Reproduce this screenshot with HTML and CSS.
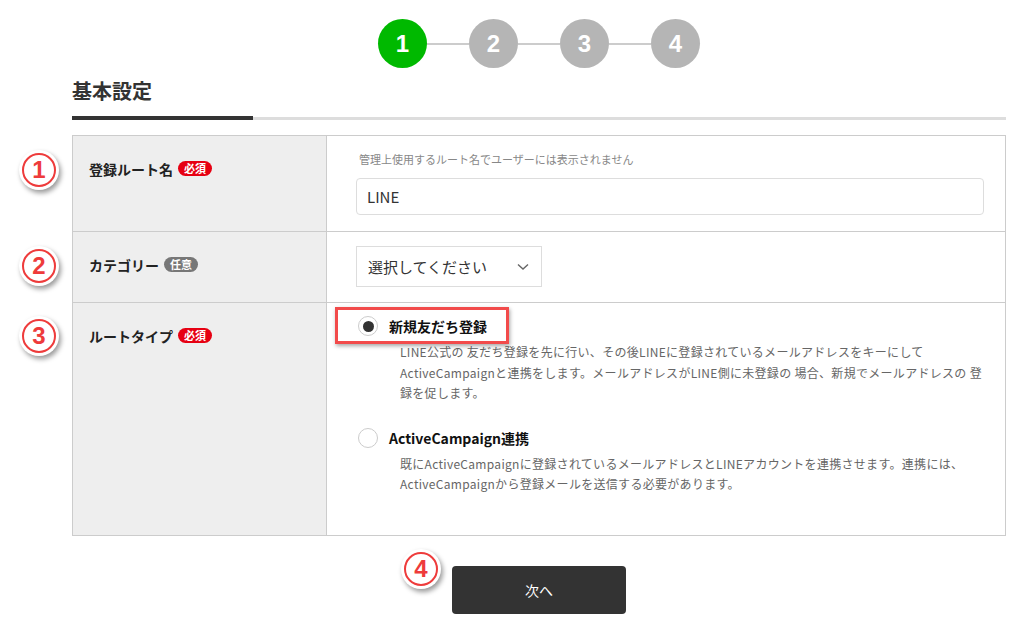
FILE: index.html
```html
<!DOCTYPE html>
<html lang="ja">
<head>
  <meta charset="UTF-8">
  <meta name="viewport" content="width=device-width, initial-scale=1.0">
  <title>登録ルート設定</title>
  <link rel="stylesheet" href="styles.css">
</head>
<body>
  <div class="page">
    <ol class="steps">
      <li class="step active">1</li>
      <li class="bar"></li>
      <li class="step">2</li>
      <li class="bar"></li>
      <li class="step">3</li>
      <li class="bar"></li>
      <li class="step">4</li>
    </ol>

    <h2 class="title">基本設定</h2>
    <div class="tabline"><span></span></div>

    <div class="form">
      <div class="row">
        <div class="label">登録ルート名<span class="badge req">必須</span></div>
        <div class="field">
          <p class="hint">管理上使用するルート名でユーザーには表示されません</p>
          <div class="input">LINE</div>
        </div>
      </div>
      <div class="row">
        <div class="label">カテゴリー<span class="badge opt">任意</span></div>
        <div class="field field-select">
          <div class="select">
            <span>選択してください</span>
            <svg width="12" height="8" viewBox="0 0 12 8"><polyline points="1,1.5 6,6 11,1.5" fill="none" stroke="#666" stroke-width="1.4"/></svg>
          </div>
        </div>
      </div>
      <div class="row">
        <div class="label">ルートタイプ<span class="badge req">必須</span></div>
        <div class="field field-type">
          <div class="option">
            <div class="opt-head"><span class="radio checked"></span>新規友だち登録</div>
            <p class="desc">LINE公式の 友だち登録を先に行い、その後LINEに登録されているメールアドレスをキーにして<br>ActiveCampaignと連携をします。メールアドレスがLINE側に未登録の 場合、新規でメールアドレスの 登<br>録を促します。</p>
            <div class="mark"></div>
          </div>
          <div class="option">
            <div class="opt-head"><span class="radio"></span>ActiveCampaign連携</div>
            <p class="desc">既にActiveCampaignに登録されているメールアドレスとLINEアカウントを連携させます。連携には、<br>ActiveCampaignから登録メールを送信する必要があります。</p>
          </div>
        </div>
      </div>
    </div>

    <div class="actions">
      <button class="next">次へ</button>
    </div>

    <div class="num n1">1</div>
    <div class="num n2">2</div>
    <div class="num n3">3</div>
    <div class="num n4">4</div>
  </div>
</body>
</html>
```

FILE: styles.css
```css
body,
div,
ol,
li,
p,
h2,
button {
  margin: 0;
  padding: 0;
  border: 0;
}

li {
  list-style: none;
}

body {
  background: #fff;
  color: #222;
  font-family: "Noto Sans CJK JP", "Noto Sans", sans-serif;
}

.page {
  position: relative;
  width: 934px;
  margin-left: 72px;
  padding-top: 19px;
}

/* steps */
.steps {
  display: flex;
  justify-content: center;
  align-items: center;
}
.step {
  width: 49px;
  height: 49px;
  border-radius: 50%;
  background: #b5b5b5;
  color: #fff;
  font-size: 24px;
  font-weight: bold;
  line-height: 49px;
  text-align: center;
  font-family: "Liberation Sans", sans-serif;
}
.step.active {
  background: #00b900;
}
.bar {
  width: 42px;
  height: 2px;
  background: #ccc;
}

/* title + tab line */
.title {
  margin-top: 9px;
  font-size: 20px;
  line-height: 27px;
  color: #333;
  padding-bottom: 12px;
}
.tabline {
  display: flex;
  align-items: center;
  height: 4px;
  background: linear-gradient(#fff 0, #fff 1px, #ddd 1px, #ddd 4px);
}
.tabline span {
  width: 181px;
  height: 4px;
  background: #333;
}

/* form table */
.form {
  margin-top: 15px;
  border: 1px solid #ccc;
}
.row {
  display: flex;
  border-top: 1px solid #ccc;
}
.row:first-child {
  border-top: 0;
}
.label {
  width: 237px;
  flex-shrink: 0;
  padding: 23px 0 0 16px;
  background: #eee;
  border-right: 1px solid #ccc;
  font-size: 14px;
  font-weight: bold;
  line-height: 20px;
  color: #222;
}
.badge {
  display: inline-block;
  margin-left: 5px;
  padding: 0 6px;
  height: 15px;
  border-radius: 8px;
  color: #fff;
  font-size: 11px;
  line-height: 15px;
  vertical-align: 2px;
}
.badge.req {
  background: #e60012;
}
.badge.opt {
  background: #777;
}
.field {
  flex: 1;
  padding: 14px 21px 16px 29px;
}
.hint {
  font-size: 11px;
  line-height: 18px;
  color: #888;
  padding-left: 3px;
}
.input {
  margin-top: 10px;
  height: 35px;
  border: 1px solid #ddd;
  border-radius: 4px;
  padding-left: 10px;
  font-size: 15px;
  line-height: 35px;
  color: #333;
}
.field-select {
  padding-bottom: 15px;
}
.select {
  display: flex;
  align-items: center;
  justify-content: space-between;
  width: 161px;
  height: 39px;
  border: 1px solid #ddd;
  padding: 0 12px 0 11px;
  font-size: 15px;
  color: #333;
}

/* route type */
.field-type {
  padding: 13px 20px 40px 31px;
}
.option {
  position: relative;
}
.option + .option {
  margin-top: 24px;
}
.opt-head {
  display: flex;
  align-items: center;
  gap: 11px;
  font-size: 14px;
  font-weight: bold;
  line-height: 20px;
  color: #111;
}
.radio {
  width: 18px;
  height: 18px;
  border: 1px solid #ccc;
  border-radius: 50%;
  display: flex;
  align-items: center;
  justify-content: center;
}
.radio.checked::after {
  content: "";
  width: 11px;
  height: 11px;
  border-radius: 50%;
  background: #333;
}
.desc {
  margin-top: 6px;
  padding-left: 42px;
  font-size: 12px;
  line-height: 20.5px;
  color: #666;
  letter-spacing: 0.3px;
  white-space: nowrap;
}
.mark {
  position: absolute;
  left: -23px;
  top: -9px;
  width: 168px;
  height: 31px;
  border: 3px solid #f24b4b;
  box-shadow: 1px 2px 4px rgba(0, 0, 0, .35);
}

/* button */
.actions {
  display: flex;
  justify-content: center;
  margin-top: 30px;
}
.next {
  width: 174px;
  height: 48px;
  border-radius: 4px;
  background: #333;
  color: #fff;
  font-size: 14px;
  font-family: "Noto Sans CJK JP", sans-serif;
}

/* annotation numbers */
.num {
  position: absolute;
  width: 40px;
  height: 40px;
  border-radius: 50%;
  background: #fff;
  box-shadow: 2px 3px 5px rgba(0, 0, 0, .4);
  display: flex;
  align-items: center;
  justify-content: center;
  color: #ee3b3b;
  font-family: "Liberation Sans", sans-serif;
  font-size: 24px;
  font-weight: bold;
}
.num::before {
  content: "";
  position: absolute;
  inset: 3px;
  border: 2.5px solid #ee3b3b;
  border-radius: 50%;
}
.n1 { left: -53px; top: 150px; }
.n2 { left: -53px; top: 246px; }
.n3 { left: -53px; top: 316px; }
.n4 { left: 329px; top: 549px; }
```
